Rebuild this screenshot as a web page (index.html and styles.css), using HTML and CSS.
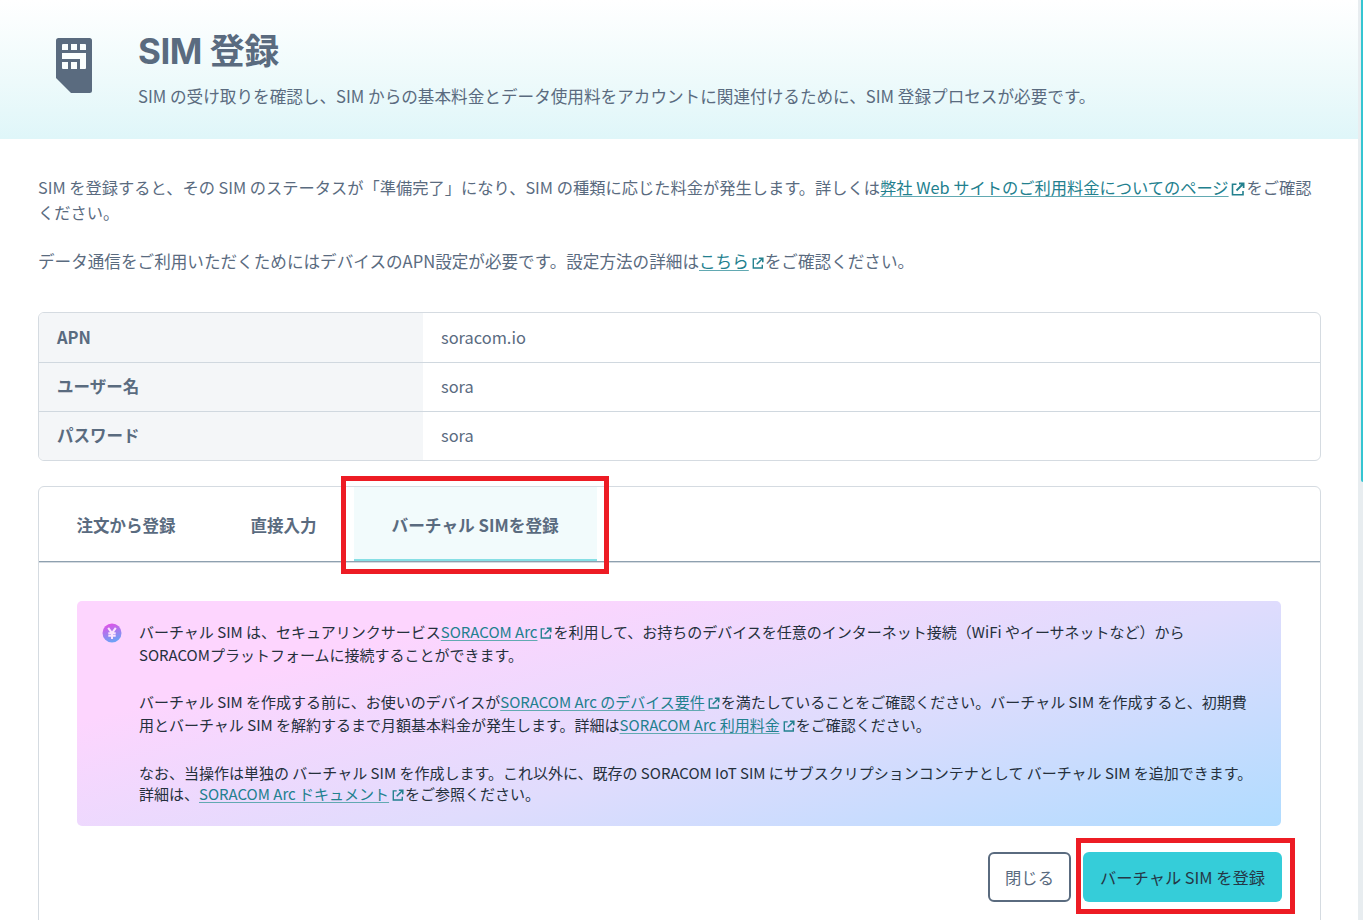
FILE: index.html
```html
<!DOCTYPE html>
<html lang="ja">
<head>
    <meta charset="UTF-8">
    <meta name="viewport" content="width=device-width, initial-scale=1.0">
    <title>SIM 登録</title>
    <link rel="stylesheet" href="styles.css">
</head>
<body>
    <!-- 外部リンクのアイコン -->
    <svg class="defs" width="0" height="0">
        <symbol id="external" viewBox="0 0 14 14">
            <path d="M5.5 2.2H1.5V12.8H12V9" fill="none" stroke="currentColor" stroke-width="1.6"/>
            <path d="M5.5 8.5L12 2M8 1.5H12.6V6" fill="none" stroke="currentColor" stroke-width="1.8"/>
        </symbol>
    </svg>

    <div class="page">
        <header class="header">
            <svg class="sim-icon" viewBox="0 0 36 55" width="36" height="55">
                <path d="M2.5 0H33.5Q36 0 36 2.5V52.5Q36 55 33.5 55H15L0 40V2.5Q0 0 2.5 0Z" fill="#5a6b7f"/>
                <g fill="#fafefe">
                    <path d="M7 6H12V12H6V7Q6 6 7 6Z"/>
                    <rect x="15" y="6" width="6" height="6"/>
                    <path d="M24 6H29Q30 6 30 7V12H24Z"/>
                    <path d="M6 15H30V30Q30 31 29 31H24V21H6Z"/>
                    <path d="M6 24H12V31H7Q6 31 6 30Z"/>
                    <rect x="15" y="24" width="6" height="7"/>
                </g>
            </svg>
            <div class="header-text">
                <h1>SIM 登録</h1>
                <p>SIM の受け取りを確認し、SIM からの基本料金とデータ使用料をアカウントに関連付けるために、SIM 登録プロセスが必要です。</p>
            </div>
        </header>

        <main class="content">
            <p class="lead lead-fee">SIM を登録すると、その SIM のステータスが「準備完了」になり、SIM の種類に応じた料金が発生します。詳しくは<a href="#">弊社 Web サイトのご利用料金についてのページ</a><svg class="ext"><use href="#external"/></svg>をご確認<br>ください。</p>
            <p class="lead">データ通信をご利用いただくためにはデバイスのAPN設定が必要です。設定方法の詳細は<a href="#">こちら</a><svg class="ext small"><use href="#external"/></svg>をご確認ください。</p>

            <!-- APN の設定 -->
            <dl class="apn">
                <dt>APN</dt>
                <dd>soracom.io</dd>
                <dt>ユーザー名</dt>
                <dd>sora</dd>
                <dt>パスワード</dt>
                <dd>sora</dd>
            </dl>

            <section class="panel">
                <nav class="tabs">
                    <div class="tab">注文から登録</div>
                    <div class="tab">直接入力</div>
                    <div class="tab active">バーチャル SIMを登録<span class="mark mark-tab"></span></div>
                </nav>

                <div class="notice">
                    <svg class="yen" viewBox="0 0 20 20" width="20" height="20">
                        <defs>
                            <linearGradient id="yen-bg" x1="0" y1="0" x2="0.3" y2="1">
                                <stop offset="0.1" stop-color="#e052e8"/>
                                <stop offset="1" stop-color="#6fa0f5"/>
                            </linearGradient>
                        </defs>
                        <circle cx="10" cy="10" r="9.5" fill="url(#yen-bg)"/>
                        <path d="M6.2 4.8L10 10.2L13.8 4.8M10 10V16M6.3 10.3H13.7M6.3 12.8H13.7" fill="none" stroke="#fbe3fd" stroke-width="2"/>
                    </svg>
                    <div class="notice-text">
                        <p>バーチャル SIM は、セキュアリンクサービス<a href="#">SORACOM Arc</a><svg class="ext small"><use href="#external"/></svg>を利用して、お持ちのデバイスを任意のインターネット接続（WiFi やイーサネットなど）から<br>SORACOMプラットフォームに接続することができます。</p>
                        <p>バーチャル SIM を作成する前に、お使いのデバイスが<a href="#">SORACOM Arc のデバイス要件</a><svg class="ext small"><use href="#external"/></svg>を満たしていることをご確認ください。バーチャル SIM を作成すると、初期費<br>用とバーチャル SIM を解約するまで月額基本料金が発生します。詳細は<a href="#">SORACOM Arc 利用料金</a><svg class="ext small"><use href="#external"/></svg>をご確認ください。</p>
                        <p class="last">なお、当操作は単独の バーチャル SIM を作成します。これ以外に、既存の SORACOM IoT SIM にサブスクリプションコンテナとして バーチャル SIM を追加できます。<br>詳細は、<a href="#">SORACOM Arc ドキュメント</a><svg class="ext small"><use href="#external"/></svg>をご参照ください。</p>
                    </div>
                </div>

                <div class="actions">
                    <button class="btn">閉じる</button>
                    <button class="btn btn-primary">バーチャル SIM を登録<span class="mark mark-btn"></span></button>
                </div>
            </section>
        </main>
    </div>
    <div class="scrollbar"><div class="thumb"></div></div>
</body>
</html>
```

FILE: styles.css
```css
* {
    box-sizing: border-box;
}

body {
    margin: 0;
    height: 920px;
    overflow: hidden;
    display: flex;
    background-color: #fff;
    color: #5a6b7f;
    font-family: "Noto Sans CJK JP", sans-serif;
    font-size: 16.5px;
}

p, h1, dl, dd {
    margin: 0;
}

.defs {
    position: absolute;
}

.page {
    width: 1358px;
    height: 920px;
    overflow: hidden;
}

/* ヘッダー */
.header {
    display: flex;
    height: 139px;
    padding: 31px 0 0 56px;
    background: linear-gradient(#fff, #edfafb 60%, #dff6f9);
}

.sim-icon {
    margin-top: 7px;
}

.header-text {
    margin-left: 46px;
    white-space: nowrap;
}

.header h1 {
    font-family: Inter, "Noto Sans CJK JP", sans-serif;
    font-size: 35px;
    line-height: 40px;
    font-weight: 700;
    letter-spacing: -0.5px;
}

.header p {
    margin-top: 13px;
    font-size: 16.62px;
    line-height: 25px;
}

/* 本文 */
.content {
    padding: 36px 37px 0 38px;
}

.lead {
    margin-bottom: 24px;
    font-size: 16.6px;
    line-height: 25px;
    white-space: nowrap;
}

.lead-fee {
    font-size: 16.25px;
}

a {
    color: #22808e;
    text-decoration: underline 1px #62a9b2;
    text-underline-offset: 2px;
}

.ext {
    width: 14px;
    height: 14px;
    margin: 0 2px 0 2px;
    color: #22808e;
    vertical-align: -2px;
}

.ext.small {
    width: 12px;
    height: 12px;
    margin: 0 1px 0 3px;
    vertical-align: -1px;
}

/* APN の表 */
.apn {
    display: grid;
    grid-template-columns: 384px 1fr;
    grid-template-rows: 50px 49px 48px;
    margin-top: 38px;
    border: 1px solid #d5dbe1;
    border-radius: 6px;
    overflow: hidden;
}

.apn dt,
.apn dd {
    padding: 0 18px;
    line-height: 47px;
    border-bottom: 1px solid #d0d8df;
}

.apn dt:first-child,
.apn dt:first-child + dd {
    line-height: 49px;
}

.apn dd {
    font-size: 16.4px;
}

.apn dt {
    background-color: #f4f6f8;
    font-weight: 700;
}

.apn dt:nth-last-child(2),
.apn dd:last-child {
    border-bottom: none;
}

/* タブ付きパネル */
.panel {
    height: 500px;
    margin-top: 25px;
    border: 1px solid #d5dbe1;
    border-radius: 6px;
}

.tabs {
    display: flex;
    height: 75px;
    border-bottom: 1px solid #8ea0af;
    box-shadow: 0 1px #d5dbe1;
}

.tab {
    padding: 0 37.5px;
    line-height: 76px;
    font-weight: 700;
    white-space: nowrap;
}

.tab.active {
    position: relative;
    width: 243px;
    font-size: 16.7px;
    background-color: #f2fbfc;
    border-bottom: 2px solid #86dfe5;
}

/* 赤い枠 */
.mark {
    position: absolute;
    border: 5px solid #ed1c24;
    pointer-events: none;
}

.mark-tab {
    top: -11px;
    left: -13px;
    width: 268px;
    height: 98px;
}

.mark-btn {
    top: -14px;
    left: -7px;
    width: 219px;
    height: 76px;
}

/* お知らせ */
.notice {
    display: flex;
    height: 225px;
    margin: 39px 39px 0 38px;
    padding: 19px 0 0 25px;
    border-radius: 5px;
    background: linear-gradient(165deg, #fdd5fe 22%, #e0dcfd 58%, #b0dcff);
    color: #25303c;
    font-size: 15px;
}

.yen {
    flex: none;
    margin-top: 3px;
}

.notice-text {
    margin-left: 17px;
    white-space: nowrap;
}

.notice p {
    margin-bottom: 24px;
    line-height: 23px;
}

.notice p.last {
    margin-top: 26px;
    line-height: 21px;
}

/* ボタン */
.actions {
    display: flex;
    justify-content: flex-end;
    gap: 12px;
    margin: 26px 38px 0 0;
}

.btn {
    height: 50px;
    width: 83px;
    padding: 0;
    border: 2px solid #5a6b7f;
    border-radius: 6px;
    background-color: #fff;
    color: #5a6b7f;
    font-family: inherit;
    font-size: 16.3px;
    cursor: pointer;
}

.btn-primary {
    position: relative;
    width: 199px;
    border: none;
    background-color: #35cdd9;
    color: #253746;
}

/* スクロールバー */
.scrollbar {
    width: 5px;
    height: 920px;
    padding-left: 3px;
    background-color: #e8edf0;
}

.thumb {
    height: 482px;
    background-color: #35c5d2;
    border-radius: 0 0 0 2px;
}
```
